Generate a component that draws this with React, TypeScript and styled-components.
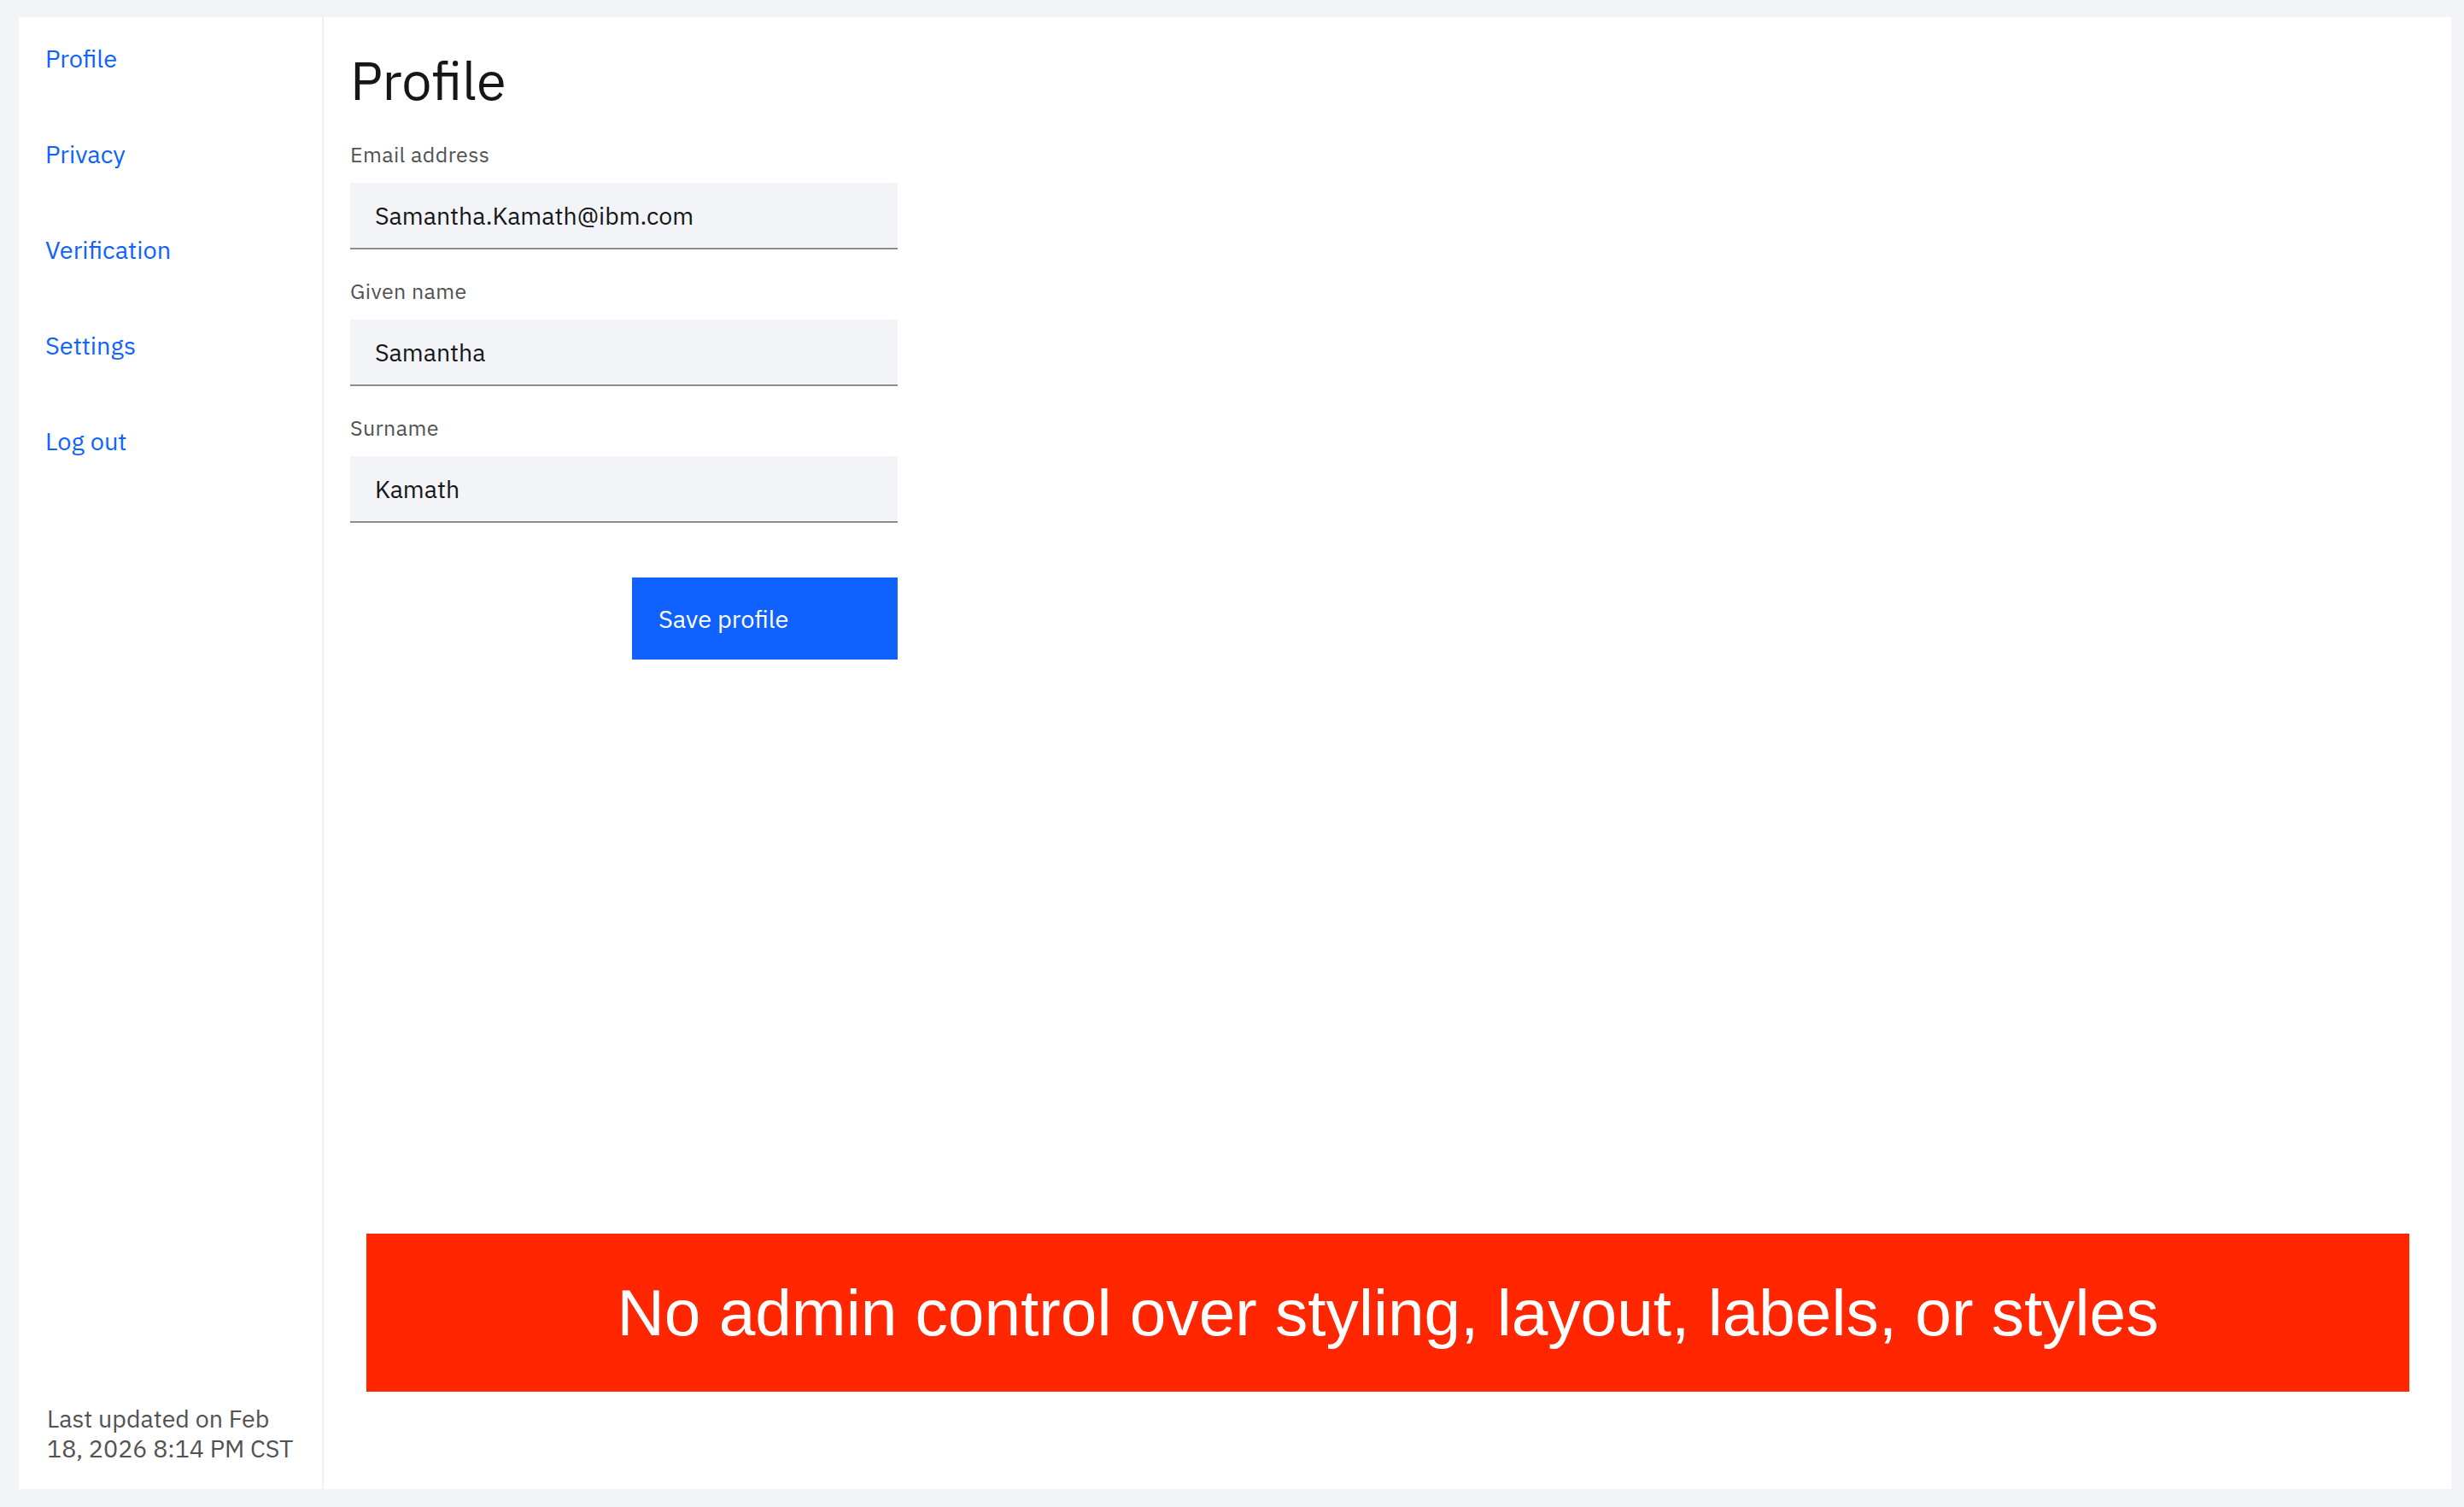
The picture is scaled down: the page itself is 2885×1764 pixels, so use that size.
import React, { useState } from 'react';
import styled, { createGlobalStyle } from 'styled-components';

const GlobalStyle = createGlobalStyle`
  html, body {
    margin: 0;
    padding: 0;
    background: #f2f4f8;
  }
  * {
    box-sizing: border-box;
  }
`;

const Page = styled.div`
  display: flex;
  min-height: 100vh;
  padding: 20px 15px 21px 22px;
  font-family: 'IBM Plex Sans', Roboto, 'Noto Sans', sans-serif;
`;

const Card = styled.div`
  flex: 1;
  display: flex;
  background: #ffffff;
`;

const Sidebar = styled.nav`
  width: 357px;
  flex-shrink: 0;
  display: flex;
  flex-direction: column;
  justify-content: space-between;
  padding: 26px 20px 30px 31px;
  border-right: 2px solid #eef0f4;
`;

const NavList = styled.div`
  display: flex;
  flex-direction: column;
  gap: 68px;
`;

const NavLink = styled.a`
  color: #0f62fe;
  font-size: 29px;
  line-height: 44px;
  text-decoration: none;
  cursor: pointer;

  &:hover {
    text-decoration: underline;
  }
`;

const Updated = styled.div`
  font-size: 28.6px;
  line-height: 35px;
  color: #525252;
  padding-left: 2px;
`;

const Main = styled.main`
  flex: 1;
  display: flex;
  flex-direction: column;
  padding: 0 49px 114px 31px;
`;

const Title = styled.h1`
  margin: 37px 0 35px;
  font-size: 63px;
  line-height: 72px;
  font-weight: 400;
  color: #161616;
`;

const Form = styled.form`
  width: 641px;
  display: flex;
  flex-direction: column;
`;

const Field = styled.div`
  margin-bottom: 32px;
`;

const Label = styled.label`
  display: block;
  font-size: 25px;
  line-height: 34px;
  color: #525252;
  margin-bottom: 16px;
  letter-spacing: 0.4px;
`;

const Input = styled.input`
  display: block;
  width: 100%;
  height: 78px;
  border: none;
  border-bottom: 2px solid #8d8d8d;
  background: #f2f4f8;
  padding: 0 29px;
  font-family: inherit;
  font-size: 28.5px;
  color: #161616;
  outline: none;
`;

const Actions = styled.div`
  display: flex;
  justify-content: flex-end;
  margin-top: 32px;
`;

const SaveButton = styled.button`
  width: 311px;
  height: 96px;
  border: none;
  background: #0f62fe;
  color: #ffffff;
  font-family: inherit;
  font-size: 29px;
  text-align: left;
  padding: 0 31px;
  cursor: pointer;

  &:hover {
    background: #0353e9;
  }
`;

const Banner = styled.div`
  margin-top: auto;
  margin-left: 19px;
  height: 185px;
  display: flex;
  align-items: center;
  justify-content: center;
  background: #ff2600;
  color: #ffffff;
  font-family: 'Liberation Sans', Arial, sans-serif;
  font-size: 76.6px;
`;

const navItems = ['Profile', 'Privacy', 'Verification', 'Settings', 'Log out'];

const App: React.FC = () => {
  const [email, setEmail] = useState('Samantha.Kamath@ibm.com');
  const [givenName, setGivenName] = useState('Samantha');
  const [surname, setSurname] = useState('Kamath');

  return (
    <>
      <GlobalStyle />
      <Page>
        <Card>
          <Sidebar>
            <NavList>
              {navItems.map(item => (
                <NavLink key={item}>{item}</NavLink>
              ))}
            </NavList>
            <Updated>Last updated on Feb 18, 2026 8:14 PM CST</Updated>
          </Sidebar>
          <Main>
            <Title>Profile</Title>
            <Form onSubmit={e => e.preventDefault()}>
              <Field>
                <Label htmlFor="email">Email address</Label>
                <Input id="email" value={email} onChange={e => setEmail(e.target.value)} />
              </Field>
              <Field>
                <Label htmlFor="given">Given name</Label>
                <Input id="given" value={givenName} onChange={e => setGivenName(e.target.value)} />
              </Field>
              <Field>
                <Label htmlFor="surname">Surname</Label>
                <Input id="surname" value={surname} onChange={e => setSurname(e.target.value)} />
              </Field>
              <Actions>
                <SaveButton type="submit">Save profile</SaveButton>
              </Actions>
            </Form>
            <Banner>No admin control over styling, layout, labels, or styles</Banner>
          </Main>
        </Card>
      </Page>
    </>
  );
};

export default App;
